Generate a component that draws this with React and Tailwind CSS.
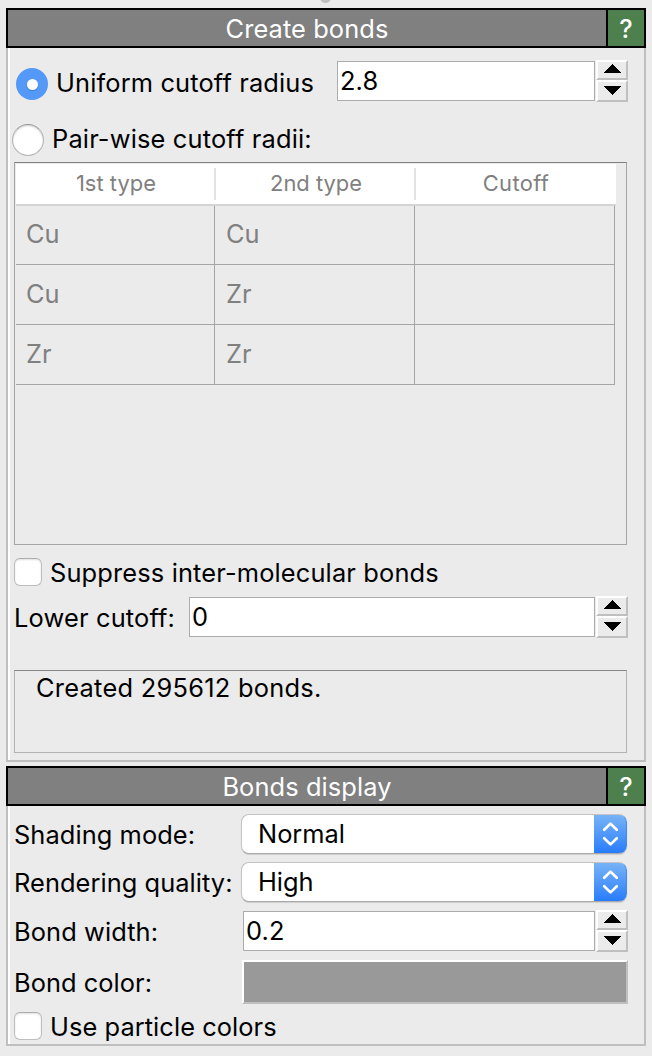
import React from "react";

function Spinner({ width, value }) {
  return (
    <div className="flex h-[42px]">
      <div className={`my-px flex h-10 items-center border border-[#acacac] bg-white pl-[2px] tracking-[0.1px] ${width}`}>
        {value}
      </div>
      <div className="ml-px flex w-8 flex-col">
        <div className="flex h-5 items-start justify-center border-2 border-t-white border-r-[#bfbfbf] border-b-[#bfbfbf] border-l-white pt-[2px]">
          <svg width="18" height="9" viewBox="0 0 18 9" shapeRendering="crispEdges">
            <path d="M0 9 9 0 18 9Z" fill="#000" />
          </svg>
        </div>
        <div className="flex h-[22px] items-start justify-center border-2 border-t-white border-r-[#bfbfbf] border-b-[#bfbfbf] border-l-white pt-1">
          <svg width="18" height="9" viewBox="0 0 18 9" shapeRendering="crispEdges">
            <path d="M0 0 9 9 18 0Z" fill="#000" />
          </svg>
        </div>
      </div>
    </div>
  );
}

function Select({ value }) {
  return (
    <div className="flex h-10 w-[386px] overflow-hidden rounded-[8px] border border-r-0 border-[#c4c4c4] border-b-[#a8a8a8] bg-white shadow-[0_1px_1px_rgba(0,0,0,0.12)]">
      <div className="flex flex-1 items-center pl-4">{value}</div>
      <div className="-my-px flex h-10 w-[33px] items-center justify-center rounded-r-[8px] border-t border-r border-b border-t-[#61a3f0] border-r-[#3f8af5] border-b-[#1c62e8] bg-linear-to-b from-[#76b2f6] to-[#277cfb]">
        <svg width="17" height="26" viewBox="0 0 17 26" fill="none" stroke="#fff" strokeWidth="2.7" strokeLinecap="round" strokeLinejoin="round">
          <path d="M2.2 8.8 8.5 2.6 14.8 8.8M2.2 17.2 8.5 23.4 14.8 17.2" />
        </svg>
      </div>
    </div>
  );
}

function Checkbox() {
  return <div className="h-7 w-7 shrink-0 rounded-[6px] border border-[#bdbdbd] border-t-[#acacac] bg-white shadow-[inset_0_1px_2px_rgba(0,0,0,0.12)]" />;
}

function Header({ title, className }) {
  return (
    <div className="flex h-10 border-2 border-black bg-[#808080] text-white">
      <div className={`flex flex-1 items-center justify-center ${className}`}>{title}</div>
      <div className="flex w-[38px] items-center justify-center border-l-2 border-black bg-[#4d804d] pt-px font-medium">?</div>
    </div>
  );
}

const rows = [
  ["Cu", "Cu", ""],
  ["Cu", "Zr", ""],
  ["Zr", "Zr", ""],
];

export default function App() {
  return (
    <div className="relative flex h-[1056px] w-[652px] flex-col gap-1 overflow-hidden bg-[#ebebeb] px-1.5 pt-2 font-['Inter',sans-serif] text-[25.4px] leading-[30px] whitespace-nowrap text-black">
      <div className="absolute top-[-8px] left-[320px] h-[11px] w-[11px] rounded-full bg-[#bfbfbf]" />

      <section>
        <Header title="Create bonds" className="pt-px tracking-[0.1px]" />
        <div className="h-[714px] border-x-2 border-b-2 border-[#bfbfbf]">
          <div className="h-full border-l-2 border-white pl-1">
            <div className="flex h-[60px] items-start pt-3">
              <div className="mt-2 ml-0.5 flex h-8 w-8 items-center justify-center rounded-full bg-[#5499f7]">
                <div className="h-[11px] w-[11px] rounded-full bg-white shadow-[0_1px_1px_rgba(0,0,0,0.2)]" />
              </div>
              <div className="mt-2 ml-2 w-[281px] tracking-[0.15px]">Uniform cutoff radius</div>
              <Spinner width="w-[258px]" value="2.8" />
            </div>

            <div className="-ml-0.5 flex h-[54px] items-start pt-4">
              <div className="h-8 w-8 rounded-full border border-[#b4b4b4] border-t-[#989898] bg-white shadow-[inset_0_1px_2px_rgba(0,0,0,0.2)]" />
              <div className="ml-2 tracking-[0.17px]">Pair-wise cutoff radii:</div>
            </div>

            <div className="h-[383px] w-[613px] border border-[#a5a5a5] border-t-[#808080] pt-px pl-px text-[#808080]">
              <div className="grid h-[42px] w-[600px] grid-cols-3 border-b-2 border-[#d4d4d4] bg-white py-1 text-[21.9px] leading-[30px]">
                <div className="flex items-start justify-center border-r-2 border-[#e2e2e2] pl-0.5 tracking-[0.05px]">1st type</div>
                <div className="flex items-start justify-center border-r-2 border-[#e2e2e2] pl-0.5">2nd type</div>
                <div className="flex items-start justify-center tracking-[0.35px]">Cutoff</div>
              </div>
              {rows.map((row, i) => (
                <div key={i} className={`flex w-[599px] border-b border-[#a5a5a5] ${i === 0 ? "h-[59px]" : "h-[60px]"}`}>
                  {row.map((cell, j) => (
                    <div key={j} className={`flex items-center border-r border-[#a5a5a5] pb-[2px] ${j === 0 ? "w-[199px] pl-[10px]" : "w-[200px] pl-[11px]"}`}>
                      {cell}
                    </div>
                  ))}
                </div>
              ))}
            </div>

            <div className="flex h-[51px] items-center pt-[3px]">
              <Checkbox />
              <div className="ml-2 pt-px tracking-[0.15px]">Suppress inter-molecular bonds</div>
            </div>

            <div className="flex h-[42px] items-center">
              <div className="w-[175px] pt-[2px] tracking-[0.17px]">Lower cutoff:</div>
              <Spinner width="w-[406px]" value="0" />
            </div>

            <div className="mt-8 h-[83px] w-[613px] border border-[#b2b2b2] border-t-[#868686] pt-[2px] pl-[21px] tracking-[0.27px]">
              Created 295612 bonds.
            </div>
          </div>
        </div>
      </section>

      <section>
        <Header title="Bonds display" className="pt-[2px] tracking-[0.1px]" />
        <div className="h-60 border-x-2 border-b-2 border-[#bfbfbf]">
          <div className="h-full border-l-2 border-white pt-2 pl-1">
            <div className="flex h-12 items-start">
              <div className="w-[227px] pt-[6px] tracking-[0.08px]">Shading mode:</div>
              <Select value="Normal" />
            </div>
            <div className="flex h-12 items-start">
              <div className="w-[227px] pt-[6px] tracking-[0.06px]">Rendering quality:</div>
              <Select value="High" />
            </div>
            <div className="flex h-[50px] items-start">
              <div className="w-[229px] pt-[7px] tracking-[0.1px]">Bond width:</div>
              <Spinner width="w-[352px]" value="0.2" />
            </div>
            <div className="flex h-[52px] items-start">
              <div className="w-[228px] pt-[8px] tracking-[0.05px]">Bond color:</div>
              <div className="h-11 w-[386px] border-2 border-t-white border-r-[#bfbfbf] border-b-[#bfbfbf] border-l-white bg-[#999999]" />
            </div>
            <div className="flex h-7 items-center">
              <Checkbox />
              <div className="ml-2 pt-px tracking-[0.07px]">Use particle colors</div>
            </div>
          </div>
        </div>
      </section>
    </div>
  );
}
